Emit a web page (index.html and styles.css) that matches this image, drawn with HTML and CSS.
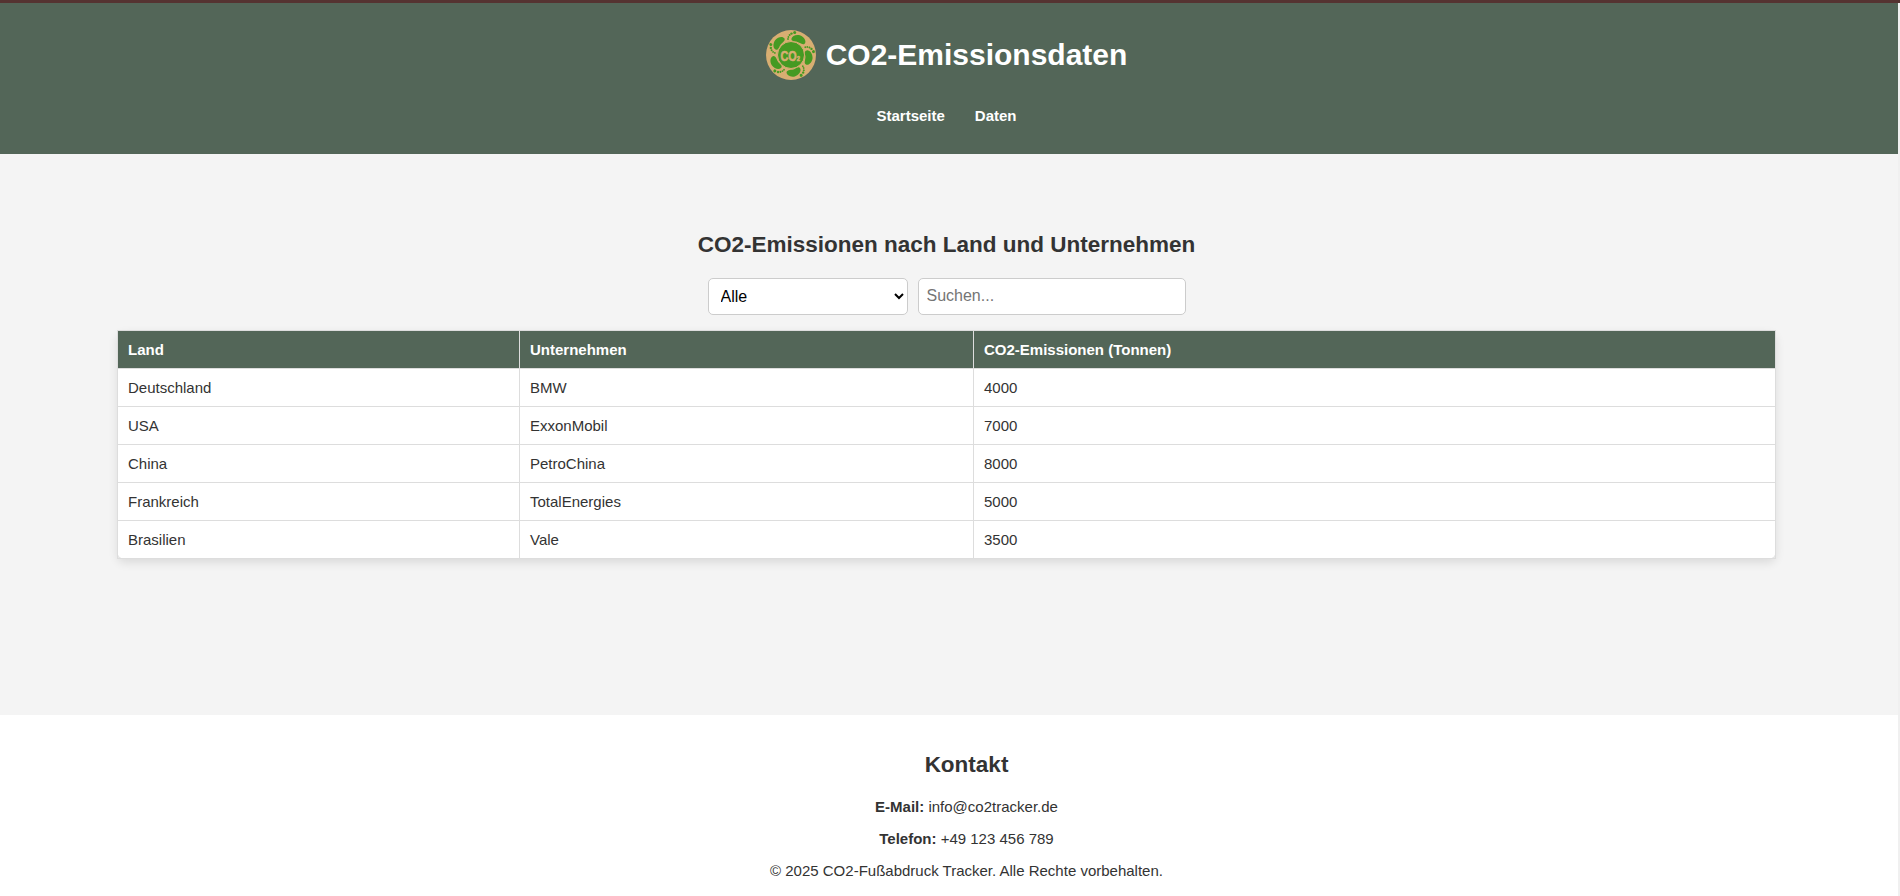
FILE: index.html
```html
<!DOCTYPE html>
<html lang="de">
<head>
<meta charset="utf-8">
<title>CO2-Emissionsdaten</title>
<link rel="stylesheet" href="styles.css">
</head>
<body>
<div class="topline"></div>
<div class="page">
  <header class="header">
    <div class="brand">
      <svg class="logo" viewBox="0 0 50 50" aria-hidden="true">
        <defs>
          <g id="foot">
            <path d="M25.500 8.600C26 5.600 30.500 4 34.500 5.400C38.500 7 40.800 11.500 38.600 13.800C36.300 15.600 33.500 12.200 30.300 11.600C27.500 11.300 25 11 25.500 8.600Z"/>
            <circle cx="22" cy="9" r="0.900"/>
            <circle cx="22.400" cy="7" r="0.900"/>
            <circle cx="23.600" cy="5.100" r="1"/>
            <circle cx="25.500" cy="3.600" r="1.200"/>
            <circle cx="28.700" cy="2.600" r="1.500"/>
          </g>
        </defs>
        <circle cx="25" cy="25" r="25" fill="#d8ae72"/>
        <g fill="#459a22">
          <use href="#foot"/>
          <use href="#foot" transform="rotate(72 25 25)"/>
          <use href="#foot" transform="rotate(144 25 25)"/>
          <use href="#foot" transform="rotate(216 25 25)"/>
          <use href="#foot" transform="rotate(288 25 25)"/>
        </g>
        <circle cx="25" cy="25" r="13.500" fill="#459a22" stroke="#d8ae72" stroke-width="1"/>
        <text class="logo-text" transform="translate(14.500 30.500) scale(0.72 1)">CO<tspan class="logo-sub">2</tspan></text>
      </svg>
      <h1>CO2-Emissionsdaten</h1>
    </div>
    <nav class="nav"><a>Startseite</a><a>Daten</a></nav>
  </header>
  <main class="main">
    <h2>CO2-Emissionen nach Land und Unternehmen</h2>
    <div class="filters">
      <select class="field country"><option>Alle</option></select>
      <input class="field search" type="text" placeholder="Suchen...">
    </div>
    <table class="data">
      <colgroup><col class="c1"><col class="c2"><col></colgroup>
      <thead><tr><th>Land</th><th>Unternehmen</th><th>CO2-Emissionen (Tonnen)</th></tr></thead>
      <tbody>
        <tr><td>Deutschland</td><td>BMW</td><td>4000</td></tr>
        <tr><td>USA</td><td>ExxonMobil</td><td>7000</td></tr>
        <tr><td>China</td><td>PetroChina</td><td>8000</td></tr>
        <tr><td>Frankreich</td><td>TotalEnergies</td><td>5000</td></tr>
        <tr><td>Brasilien</td><td>Vale</td><td>3500</td></tr>
      </tbody>
    </table>
  </main>
  <footer class="footer">
    <h2>Kontakt</h2>
    <p><strong>E-Mail:</strong> info@co2tracker.de</p>
    <p><strong>Telefon:</strong> +49 123 456 789</p>
    <p>© 2025 CO2-Fußabdruck Tracker. Alle Rechte vorbehalten.</p>
  </footer>
</div>
</body>
</html>
```
FILE: styles.css
```css
* { box-sizing: border-box; }
html { background: #f0f0f0; }
body {
  margin: 0;
  height: 896px;
  overflow: hidden;
  font-family: "Liberation Sans", Arial, sans-serif;
  font-size: 15px;
  line-height: 17px;
  color: #333;
}
h1, h2, p { margin: 0; }
.topline { height: 3px; background: #553331; }
.page {
  display: flex;
  flex-direction: column;
  width: 1898px;
  height: 893px;
  background: #f4f4f4;
}
.header {
  height: 151px;
  padding: 27px 5px 0 0;
  background: #536658;
  color: #fff;
}
.brand {
  display: flex;
  justify-content: center;
  align-items: center;
  gap: 10px;
  height: 50px;
}
.logo { width: 50px; height: 50px; }
.logo-text {
  fill: #d8ae72;
  stroke: #d8ae72;
  stroke-width: 0.6;
  font-size: 15px;
  font-weight: bold;
}
.logo-sub { font-size: 8px; }
h1 { font-size: 30px; line-height: 34px; }
.nav {
  display: flex;
  justify-content: center;
  gap: 30px;
  margin-top: 27px;
  font-weight: bold;
}
.main {
  height: 561px;
  padding: 78px 122px 0 117px;
}
h2 { font-size: 22.5px; line-height: 26px; text-align: center; }
.filters {
  display: flex;
  justify-content: center;
  gap: 10px;
  margin-top: 20px;
}
.field {
  height: 37px;
  margin: 0;
  border: 1px solid #ccc;
  border-radius: 5px;
  background: #fff;
  color: #000;
  font-family: inherit;
  font-size: 16px;
}
.country { width: 200px; padding: 7px 8px 8px; }
.search { width: 268px; padding: 6px 8px 8px; }
.search::placeholder { color: #757575; }
.data {
  width: 1659px;
  margin-top: 15px;
  border-collapse: collapse;
  table-layout: fixed;
  background: #fff;
  border-radius: 8px;
  box-shadow: 0 4px 10px rgba(0, 0, 0, 0.1);
}
.c1 { width: 402px; }
.c2 { width: 454px; }
.data th, .data td {
  height: 38px;
  padding: 0 10px;
  border: 1px solid #ddd;
  text-align: left;
}
.data th { background: #536658; color: #fff; }
.footer {
  flex: 1;
  padding: 37px 5px 0 40px;
  background: #fff;
  text-align: center;
}
.footer h2 { margin-bottom: 20px; }
.footer p { margin-bottom: 15px; }
```
